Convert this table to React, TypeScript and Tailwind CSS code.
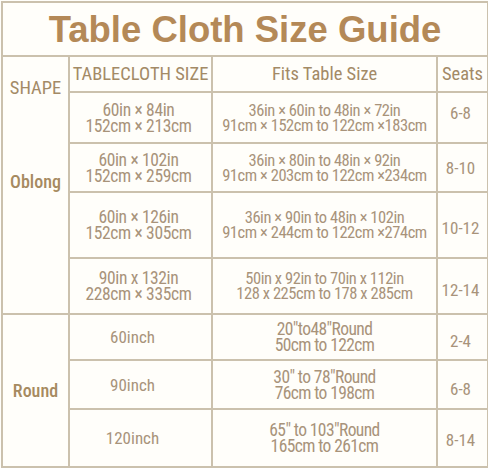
const cond = {
  fontFamily: '"Roboto Condensed", "Liberation Sans Narrow", "DejaVu Sans Condensed", Roboto, sans-serif',
}

type Row = { size: string[]; fits: string[]; seats: string; h: string; sp: string }

const oblong: Row[] = [
  { size: ["60in × 84in", "152cm × 213cm"], fits: ["36in × 60in to 48in × 72in", "91cm × 152cm to 122cm ×183cm"], seats: "6-8", h: "h-[51px]", sp: "pb-[10px]" },
  { size: ["60in × 102in", "152cm × 259cm"], fits: ["36in × 80in to 48in × 92in", "91cm × 203cm to 122cm ×234cm"], seats: "8-10", h: "h-[49px]", sp: "pt-[1px]" },
  { size: ["60in × 126in", "152cm × 305cm"], fits: ["36in × 90in to 48in × 102in", "91cm × 244cm to 122cm ×274cm"], seats: "10-12", h: "h-[66px]", sp: "pt-[6px]" },
  { size: ["90in x 132in", "228cm × 335cm"], fits: ["50in x 92in to 70in x 112in", "128 x 225cm to 178 x 285cm"], seats: "12-14", h: "h-[56px]", sp: "pt-[7px]" },
]

const round: Row[] = [
  { size: ["60inch"], fits: ['20"to48"Round', "50cm to 122cm"], seats: "2-4", h: "h-[46px]", sp: "pt-2" },
  { size: ["90inch"], fits: ['30" to 78"Round', "76cm to 198cm"], seats: "6-8", h: "h-[49px]", sp: "pt-2" },
  { size: ["120inch"], fits: ['65" to 103"Round', "165cm to 261cm"], seats: "8-14", h: "h-[58px]", sp: "pt-1" },
]

const cell = "border-2 border-[#cbc1ad] text-center align-middle p-0 whitespace-nowrap"

function Lines({ lines, className }: { lines: string[]; className: string }) {
  return (
    <div className={className}>
      {lines.map((l) => (
        <div key={l}>{l}</div>
      ))}
    </div>
  )
}

export default function App() {
  return (
    <div className="w-[488px] h-[468px] bg-[#fffefa] pl-px pt-px">
      <table
        className="w-[486px] table-fixed border-collapse text-[17px] leading-[18px] text-[#a8937a]"
        style={cond}
      >
        <colgroup>
          <col className="w-[67px]" />
          <col className="w-[143px]" />
          <col className="w-[225px]" />
          <col className="w-[51px]" />
        </colgroup>
        <tbody>
          <tr className="h-[54px]">
            <td
              colSpan={4}
              className={cell + " font-bold text-[36.5px] leading-none text-[#b48957] pt-[3px]"}
              style={{ fontFamily: '"Liberation Sans", Arial, sans-serif' }}
            >
              Table Cloth Size Guide
            </td>
          </tr>
          <tr className="h-[36px] text-[18.5px] text-[#a38a66]">
            <td rowSpan={5} className={cell + " align-top"}>
              <div className="flex flex-col items-center leading-[18px]">
                <div className="mt-[22px] text-[18.5px] text-[#a38a66]">SHAPE</div>
                <div className="mt-[76px] text-[18px] font-medium text-[#a68a60]">Oblong</div>
              </div>
            </td>
            <td className={cell}>TABLECLOTH SIZE</td>
            <td className={cell}>Fits Table Size</td>
            <td className={cell}>Seats</td>
          </tr>
          {oblong.map((r) => (
            <tr key={r.seats} className={r.h}>
              <td className={cell + " pr-1"}>
                <Lines lines={r.size} className="text-[17.5px] leading-[16px] tracking-[-0.35px]" />
              </td>
              <td className={cell}>
                <Lines lines={r.fits} className="text-[16.5px] leading-[15px] tracking-[-0.45px]" />
              </td>
              <td className={cell + " pr-1 " + r.sp}>{r.seats}</td>
            </tr>
          ))}
          {round.map((r, i) => (
            <tr key={r.seats + r.size[0]} className={r.h}>
              {i === 0 && (
                <td rowSpan={3} className={cell + " text-[18px] font-medium text-[#a68a60]"}>
                  Round
                </td>
              )}
              <td className={cell + " pr-4"}>
                <Lines lines={r.size} className="text-[17px] leading-[18px]" />
              </td>
              <td className={cell}>
                <Lines lines={r.fits} className="text-[17.5px] leading-[16px] tracking-[-0.6px]" />
              </td>
              <td className={cell + " pr-1 " + r.sp}>{r.seats}</td>
            </tr>
          ))}
        </tbody>
      </table>
    </div>
  )
}
